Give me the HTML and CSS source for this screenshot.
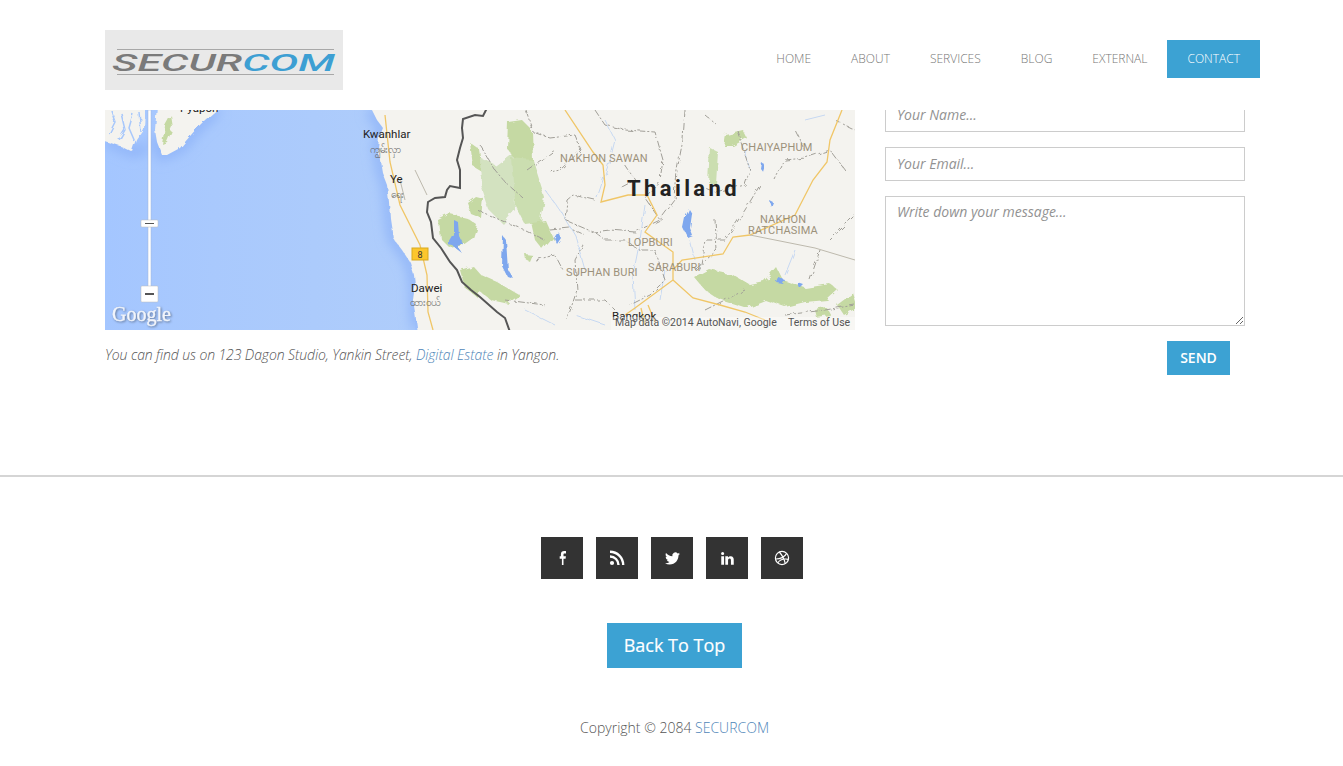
FILE: index.html
```html
<!DOCTYPE html>
<html lang="en">
<head>
    <meta charset="UTF-8">
    <meta name="viewport" content="width=device-width, initial-scale=1.0">
    <title>Securcom - Contact</title>
    <link rel="stylesheet" href="styles.css">
</head>
<body>
    <header class="site-header">
        <a class="logo" href="#">
            <svg width="238" height="60" viewBox="0 0 238 60">
                <rect width="238" height="60" fill="#e9e9e9"/>
                <rect x="12" y="19" width="217" height="1" fill="#a8a8a8"/>
                <rect x="12" y="44" width="217" height="1" fill="#a8a8a8"/>
                <text class="logo-text" x="7" y="41" textLength="223" lengthAdjust="spacingAndGlyphs"><tspan fill="#7a7a7a">SECUR</tspan><tspan fill="#3d9fd3">COM</tspan></text>
            </svg>
        </a>
        <nav class="main-nav">
            <a href="#">HOME</a>
            <a href="#">ABOUT</a>
            <a href="#">SERVICES</a>
            <a href="#">BLOG</a>
            <a href="#">EXTERNAL</a>
            <a class="active" href="#">CONTACT</a>
        </nav>
    </header>

    <main class="contact">
        <section class="map-col">
            <svg class="map" width="750" height="220" viewBox="0 0 750 220">
                <defs>
                    <filter id="soft"><feGaussianBlur stdDeviation="6"/></filter>
                    <filter id="rough" x="-5%" y="-5%" width="110%" height="110%">
                        <feTurbulence type="fractalNoise" baseFrequency="0.09" numOctaves="3" seed="4"/>
                        <feDisplacementMap in="SourceGraphic" scale="7"/>
                    </filter>
                    <filter id="rough-line" x="-5%" y="-5%" width="110%" height="110%">
                        <feTurbulence type="fractalNoise" baseFrequency="0.12" numOctaves="2" seed="9"/>
                        <feDisplacementMap in="SourceGraphic" scale="5"/>
                    </filter>
                    <linearGradient id="sea" x1="0" x2="1" y1="0" y2="0">
                        <stop offset="0" stop-color="#a4c6ff"/>
                        <stop offset="0.35" stop-color="#a9c9fd"/>
                        <stop offset="1" stop-color="#afcdfb"/>
                    </linearGradient>
                </defs>
                <rect width="750" height="220" fill="#a8c8fd"/>
                <rect width="310" height="220" fill="url(#sea)"/>
                <!-- coast shadow -->
                <path class="coast-shadow" filter="url(#soft)" d="M265 0L278 18 273 38 277 62 282 75 285 108 288 128 305 152 310 175 310 202 313 220M0 30L12 35 28 42 42 38M50 25L57 45 75 38 92 18 112 0"/>
                <!-- land -->
                <g filter="url(#rough-line)">
                    <path class="land" d="M265 -4L272 10 278 18 274 28 273 38 277 62 282 75 284 92 285 108 288 128 297 140 305 152 309 165 310 175 308 190 310 202 313 224H760V-4Z"/>
                    <path class="land" d="M-4 -4H40L39 20 32 30 28 42 18 37 12 35 -4 30Z"/>
                    <path class="land" d="M52 -4H116L100 10 92 18 80 32 75 38 62 45 57 45 52 32 50 20Z"/>
                    <path class="sea-inlet" d="M6 0L10 12 4 24M16 3L20 20 14 30M28 4L24 18 30 32M34 2L36 22"/>
                </g>
                <!-- green areas -->
                <g filter="url(#rough)">
                    <path class="green" d="M60 16L66 5 68 18 62 32 57 34Z"/>
                    <path class="green" d="M333 110L345 104 362 108 372 115 368 128 358 135 345 138 335 128Z"/>
                    <path class="green" d="M355 160L368 156 376 165 372 187 360 178Z"/>
                    <path class="green" d="M365 33L375 40 378 62 368 56Z"/>
                    <path class="green" d="M362 92L370 86 378 88 376 108 366 104Z"/>
                    <path class="green-pale" d="M375 48L392 56 408 44 410 100 398 114 384 100 376 75Z"/>
                    <path class="green" d="M403 12L417 10 427 20 428 52 410 50 402 38Z"/>
                    <path class="green-mid" d="M406 48L428 50 440 88 436 112 420 114 410 95Z"/>
                    <path class="green" d="M426 112L440 110 448 128 438 140 430 130Z"/>
                    <path class="green" d="M374 164L392 172 416 186 404 194 386 190 370 178Z"/>
                    <path class="green" d="M620 24L638 20 642 28 628 36 618 36Z"/>
                    <path class="green-mid" d="M605 38L613 42 611 74 603 72Z"/>
                    <path class="green" d="M590 168L605 160 628 165 645 175 660 172 672 158 678 170 700 178 725 174 733 180 722 190 700 192 680 197 660 190 640 198 615 190 600 180Z"/>
                    <path class="green" d="M732 195L748 183 752 196 738 204Z"/>
                    <path class="green" d="M420 144L428 145 425 152 421 150Z"/>
                    <path class="green" d="M710 200L722 198 726 206 712 208Z"/>
                </g>
                <!-- water -->
                <g filter="url(#rough-line)">
                    <path class="lake" d="M349 110L353 112 354 126 358 134 352 136 356 142 348 136 343 135 349 125Z"/>
                    <path class="lake" d="M398 126L401 130 403 160 408 168 402 166 397 156Z"/>
                    <path class="lake" d="M584 99L587 104 585 118 588 126 583 128 578 118 580 108Z"/>
                    <path class="lake" d="M453 122L456 128 452 134 449 128Z"/>
                    <path class="lake" d="M656 52L660 55 658 62 655 58ZM674 168L680 170 678 174 672 173ZM692 172L698 174 694 178ZM664 90L668 92 666 97Z"/>
                    <path class="stream" d="M500 10L510 30 505 50 498 70 492 88M540 95L535 130 528 165 530 200M585 130L590 150M640 40L645 60M560 160L555 190M440 80L455 100 470 125 480 160M700 10L720 5M420 200L450 215M470 205L500 215M690 140L680 165"/>
                </g>
                <!-- province borders -->
                <path class="prov" filter="url(#rough-line)" d="M421 0L428 22 445 28 470 25 476 40 455 60 445 62M490 0L500 15 520 20 550 22 558 50 555 70 540 88 555 110 530 122 505 120 488 122 460 110 462 90 468 85 490 90M375 35L390 60 400 72 418 88M490 122L500 130 520 130 535 140 550 140 560 170 545 185 525 195M478 135L470 150 472 180 462 210M580 0L578 30 572 60 570 90 555 110M632 20L645 60 640 75 610 82 600 78M610 110L612 140 590 160M655 75L640 100 620 130 600 130 595 160M740 60L725 40 700 48 680 50 670 70M715 140L705 170M725 130L745 110 750 105M445 120L465 118 480 125M422 60L436 50 450 40M520 55L530 70 515 78M470 190L500 190 510 200M600 200L640 180M680 205L720 200 750 195M690 20L700 40M600 5L612 15M730 10L750 20M430 150L450 145 458 160M400 190L440 195M372 100L400 112 420 120 440 130"/>
                <!-- roads -->
                <path class="road" d="M460 0L488 42 498 55 500 75 496 92 523 85 542 85 552 105 540 122 568 142 568 170 530 198 520 205"/>
                <path class="road" d="M568 160L577 150 618 144 628 127 645 125 690 105 708 70 722 52 725 30 737 0"/>
                <path class="road" d="M568 170L588 188 615 195 640 202 660 210"/>
                <path class="road" d="M536 198L540 215M543 195L550 212"/>
                <path class="road" d="M280 5L285 52 295 95 315 135 322 165 323 202 328 220"/>
                <path class="road-grey" d="M645 125L710 138 750 150M295 70L300 90M310 60L322 85"/>
                <!-- country border -->
                <path class="border" d="M382 -2L378 6 370 5 358 9 357 18 358 28 355 38 352 50 355 60 355 78 345 76 342 80 340 87 330 88 323 92 322 102 326 112 328 128 336 138 345 152 352 160 357 172 366 180 375 187 392 202 400 208 405 222"/>
                <!-- shield -->
                <rect class="shield" x="307" y="138" width="16" height="12"/>
                <text class="shield-num" x="315" y="147.500" text-anchor="middle">8</text>
                <!-- labels -->
                <text class="place" x="75" y="2">Pyapon</text>
                <text class="place" x="258" y="28">Kwanhlar</text>
                <text class="place" x="285" y="73">Ye</text>
                <text class="place" x="306" y="182">Dawei</text>
                <text class="place" x="507" y="210">Bangkok</text>
                <text class="region" x="455" y="52">NAKHON SAWAN</text>
                <text class="region" x="636" y="41">CHAIYAPHUM</text>
                <text class="region" x="655" y="113">NAKHON</text>
                <text class="region" x="643" y="124">RATCHASIMA</text>
                <text class="region" x="523" y="136">LOPBURI</text>
                <text class="region" x="543" y="161">SARABURI</text>
                <text class="region" x="461" y="166">SUPHAN BURI</text>
                <text class="country" x="522" y="86">Thailand</text>
                <text class="burmese" x="265" y="43">ကျွမ်းလှာ</text>
                <text class="burmese" x="286" y="88">ရေး</text>
                <text class="burmese" x="305" y="196">ထားဝယ်</text>
                <!-- attribution -->
                <rect class="attr-bg" x="506" y="207" width="244" height="13"/>
                <text class="attr" x="510" y="216">Map data ©2014 AutoNavi, Google</text>
                <text class="attr" x="683" y="216">Terms of Use</text>
                <text class="google" x="7" y="211">Google</text>
                <!-- zoom control -->
                <rect class="zoom-track" x="43" y="0" width="3" height="177"/>
                <rect class="zoom-btn" x="36" y="110" width="17" height="7" rx="1"/>
                <rect class="zoom-mark" x="40" y="113" width="9" height="1"/>
                <rect class="zoom-btn" x="36" y="176" width="17" height="16" rx="1"/>
                <rect class="zoom-mark" x="40" y="183" width="9" height="2"/>
            </svg>
            <p class="address">You can find us on 123 Dagon Studio, Yankin Street, <a href="#">Digital Estate</a> in Yangon.</p>
        </section>

        <form class="contact-form">
            <input type="text" placeholder="Your Name...">
            <input type="email" placeholder="Your Email...">
            <textarea placeholder="Write down your message..."></textarea>
            <button type="submit">SEND</button>
        </form>
    </main>

    <footer class="site-footer">
        <div class="social">
            <a href="#"><svg width="16" height="16" viewBox="0 0 16 16"><path d="M9.500 15V8.700h2.100l.3-2.500H9.500V4.700c0-.7.2-1.200 1.200-1.200h1.300V1.200c-.2 0-1-.1-1.900-.1-1.900 0-3.200 1.100-3.200 3.200v1.900H5.700v2.500h2.200V15z"/></svg></a>
            <a href="#"><svg width="16" height="16" viewBox="0 0 16 16"><circle cx="3" cy="13" r="2.100"/><path class="stroke" d="M1 6.500A8.500 8.500 0 0 1 9.500 15M1 1.800A13.200 13.200 0 0 1 14.200 15" stroke-width="2.400"/></svg></a>
            <a href="#"><svg width="15" height="15" viewBox="0 0 24 24"><path d="M23.950 4.570a10 10 0 0 1-2.825.775 4.958 4.958 0 0 0 2.163-2.723c-.951.555-2.005.959-3.127 1.184a4.920 4.920 0 0 0-8.384 4.482C7.690 8.095 4.067 6.130 1.640 3.162a4.822 4.822 0 0 0-.666 2.475c0 1.710.870 3.213 2.188 4.096a4.904 4.904 0 0 1-2.228-.616v.060a4.923 4.923 0 0 0 3.946 4.827 4.996 4.996 0 0 1-2.212.085 4.936 4.936 0 0 0 4.604 3.417 9.867 9.867 0 0 1-6.102 2.105c-.390 0-.779-.023-1.170-.067a13.995 13.995 0 0 0 7.557 2.209c9.053 0 13.998-7.496 13.998-13.985 0-.210 0-.420-.015-.630A9.935 9.935 0 0 0 24 4.590z"/></svg></a>
            <a href="#"><svg width="15" height="15" viewBox="0 0 24 24"><path d="M6.500 8.500H2v13.500h4.500zM4.200 1.500a2.500 2.500 0 1 0 0 5 2.500 2.500 0 0 0 0-5zM22 22h-4.500v-6.600c0-1.600 0-3.600-2.100-3.600s-2.500 1.700-2.500 3.500V22H8.500V8.500h4.300v1.900h.1c.6-1.100 2-2.200 4-2.200 4.200 0 5.100 2.700 5.100 6.300z"/></svg></a>
            <a href="#"><svg width="16" height="16" viewBox="0 0 16 16"><g class="stroke" stroke-width="1.200"><circle cx="8" cy="8" r="6.600"/><path d="M5.300 2C8 5 10.500 9 11.300 13.800M1.500 9C6 9.200 11 7 12.700 3.300M3.700 13C5.500 10 9 8.300 14.500 9.300"/></g></svg></a>
        </div>
        <a class="back-top" href="#">Back To Top</a>
        <p class="copyright">Copyright © 2084 <a href="#">SECURCOM</a></p>
    </footer>
</body>
</html>
```

FILE: styles.css
```css
* { box-sizing: border-box; }
body { margin: 0; font-family: "Open Sans", sans-serif; font-weight: 300; color: #555; background: #fff; overflow: hidden; }
a { text-decoration: none; }

.site-header { position: fixed; top: 0; left: 0; right: 0; z-index: 10; height: 110px; padding: 30px 83px 0 105px; background: #fff; display: flex; justify-content: space-between; align-items: flex-start; }
.logo { display: block; height: 60px; }
.logo svg { display: block; }
.logo-text { font-family: Roboto, sans-serif; font-weight: 500; font-style: italic; font-size: 23px; }
.main-nav { display: flex; margin-top: 10px; }
.main-nav a { display: block; height: 38px; line-height: 37px; padding: 0 20px; font-size: 12px; color: #777; }
.main-nav a.active { background: #3ca2d3; color: #fff; }

.contact { margin-top: 110px; padding-left: 105px; display: flex; gap: 30px; height: 365px; }
.map-col { width: 750px; }
.map { display: block; }
.address { margin: 15px 0 0; font-size: 14px; line-height: 20px; letter-spacing: -.105px; font-style: italic; color: #555; }
.address a { color: #4f86b8; }

.coast-shadow { fill: none; stroke: #8fb4f8; stroke-width: 10; }
.land { fill: #f4f3ef; }
.sea-inlet { fill: none; stroke: #a8c8fb; stroke-width: 1.500; }
.green { fill: #c5d9a3; }
.green-mid { fill: #cbdeb0; }
.green-pale { fill: #d3e2c0; }
.lake { fill: #7ea7ee; }
.stream { fill: none; stroke: #c6d8f2; stroke-width: 1; }
.prov { fill: none; stroke: #a09e97; stroke-width: 1; stroke-dasharray: 7 2 2 2; }
.road { fill: none; stroke: #f0c667; stroke-width: 1.300; }
.road-grey { fill: none; stroke: #bdb9ad; stroke-width: 1; }
.border { fill: none; stroke: #555; stroke-width: 2; }
.shield { fill: #fcc62d; stroke: #d8a91f; stroke-width: 1; }
.shield-num { font: 9px Roboto, sans-serif; fill: #333; }
.place { font: 11.500px Roboto, sans-serif; fill: #222; }
.region { font: 11px Roboto, sans-serif; letter-spacing: .15px; fill: #9c917b; }
.country { font: bold 22px Roboto, sans-serif; letter-spacing: 3.400px; fill: #222; }
.burmese { font: 10px "Noto Sans", sans-serif; fill: #666; }
.attr-bg { fill: #fff; opacity: .35; }
.attr { font: 10.500px Roboto, sans-serif; fill: #555; }
.google { font: 20px "Liberation Serif", serif; fill: #f2f5fb; stroke: #f2f5fb; stroke-width: .4; filter: drop-shadow(1px 1px 1px #667a9c); }
.zoom-track { fill: #fff; stroke: #9eb5d8; stroke-width: .5; }
.zoom-btn { fill: #fff; stroke: #bbb; stroke-width: .5; }
.zoom-mark { fill: #555; }

.contact-form { width: 360px; margin-top: -12px; display: flex; flex-direction: column; align-items: flex-start; }
.contact-form input, .contact-form textarea { display: block; width: 360px; padding: 0 11px; border: 1px solid #ccc; font-family: "Open Sans", sans-serif; font-size: 14px; font-weight: 400; font-style: italic; background: #fff; }
.contact-form input { height: 34px; margin-bottom: 15px; padding-bottom: 2px; }
.contact-form textarea { height: 130px; padding-top: 5px; resize: vertical; }
.contact-form ::placeholder { color: #929292; opacity: 1; }
.contact-form button { margin: 15px 0 0 282px; width: 63px; height: 34px; border: none; padding: 0 0 2px; background: #3ca2d3; color: #fff; font-family: "Open Sans", sans-serif; font-size: 14px; font-weight: 600; }

.site-footer { border-top: 2px solid #d5d5d5; display: flex; flex-direction: column; align-items: center; padding: 60px 0 0 6px; }
.social { display: flex; gap: 13px; margin-left: -5px; }
.social a { width: 42px; height: 42px; background: #333; display: flex; align-items: center; justify-content: center; }
.social svg { fill: #fff; }
.social .stroke { fill: none; stroke: #fff; }
.back-top { margin-top: 44px; width: 135px; height: 45px; line-height: 45px; text-align: center; background: #3ca2d3; color: #fff; font-size: 18px; font-weight: 500; -webkit-text-stroke: .2px #fff; }
.copyright { margin: 50px 0 0; font-size: 14px; line-height: 20px; color: #555; }
.copyright a { color: #4f86b8; }
```
